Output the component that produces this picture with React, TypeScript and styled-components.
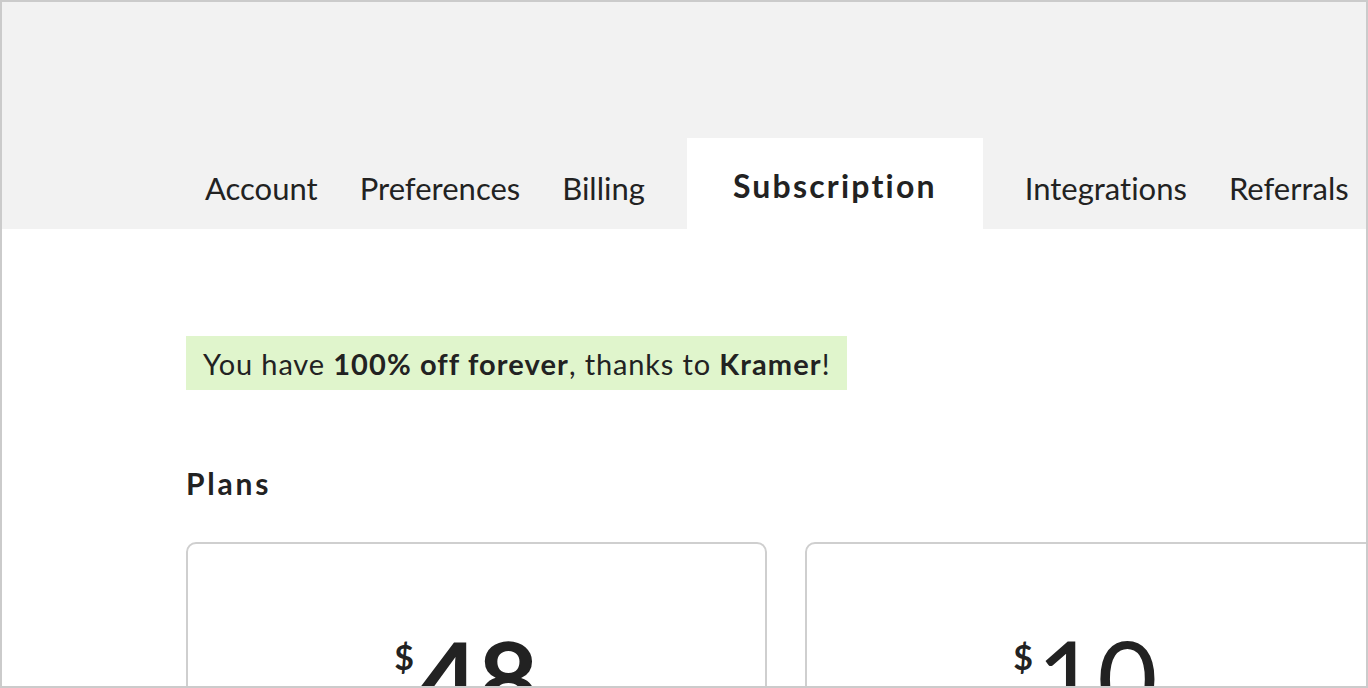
import React from 'react'
import styled, { createGlobalStyle } from 'styled-components'

const GlobalStyle = createGlobalStyle`
  html, body {
    margin: 0;
    padding: 0;
    background: #fff;
  }
  body {
    font-family: Lato, "Open Sans", sans-serif;
    color: #222;
  }
  * {
    box-sizing: border-box;
  }
`

const Frame = styled.div`
  width: 1368px;
  height: 688px;
  border: 2px solid #cbcbcb;
  overflow: hidden;
  display: flex;
  flex-direction: column;
`

const Header = styled.header`
  height: 227px;
  flex-shrink: 0;
  background: #f2f2f2;
  display: flex;
  align-items: flex-end;
  padding-left: 182px;
`

const TabList = styled.nav`
  display: flex;
  align-items: flex-end;
  white-space: nowrap;
`

const Tab = styled.a<{ $active?: boolean }>`
  display: flex;
  align-items: center;
  justify-content: center;
  height: 91px;
  margin: ${p => (p.$active ? '0 21px' : '0')};
  padding: ${p => (p.$active ? '3px 46px 0' : '8px 21px 0')};
  background: ${p => (p.$active ? '#fff' : 'transparent')};
  font-size: ${p => (p.$active ? '32px' : '31px')};
  font-weight: ${p => (p.$active ? 700 : 400)};
  letter-spacing: ${p => (p.$active ? '2.2px' : '0')};
  font-variant-ligatures: no-common-ligatures;
  color: #222;
  text-decoration: none;
  cursor: pointer;
`

const Content = styled.main`
  flex: 1;
  padding: 107px 0 0 184px;
  display: flex;
  flex-direction: column;
  align-items: flex-start;
`

const Discount = styled.p`
  margin: 0;
  height: 54px;
  display: flex;
  align-items: center;
  padding: 0 17px;
  background: #e0f5cc;
  font-size: 29px;
  letter-spacing: 0.85px;
  white-space: pre;

  strong {
    font-weight: 700;
    letter-spacing: 1.1px;
  }
`

const SectionTitle = styled.h2`
  margin: 73px 0 0 0;
  font-size: 30px;
  font-weight: 700;
  letter-spacing: 2.8px;
  line-height: 40px;
`

const Cards = styled.div`
  display: flex;
  gap: 38px;
  margin-top: 39px;
`

const Card = styled.div`
  width: 581px;
  height: 300px;
  flex-shrink: 0;
  border: 2px solid #cfcfcf;
  border-radius: 10px;
  display: flex;
  justify-content: center;
  padding-top: 86px;
`

const Price = styled.div<{ $bold?: boolean }>`
  display: flex;
  align-items: flex-start;
  margin-right: 20px;
  font-weight: ${p => (p.$bold ? 700 : 400)};
`

const Currency = styled.span`
  font-size: 34px;
  font-weight: 700;
  line-height: 1;
  margin-top: 10px;
  margin-right: 4px;
`

const Amount = styled.span`
  font-size: 104px;
  line-height: 0.9;
`

export default function App() {
  const tabs = ['Account', 'Preferences', 'Billing', 'Subscription', 'Integrations', 'Referrals']
  return (
    <>
      <GlobalStyle />
      <Frame>
        <Header>
          <TabList>
            {tabs.map(t => (
              <Tab key={t} $active={t === 'Subscription'}>{t}</Tab>
            ))}
          </TabList>
        </Header>
        <Content>
          <Discount>
            You have <strong>100% off forever</strong>, thanks to <strong>Kramer</strong>!
          </Discount>
          <SectionTitle>Plans</SectionTitle>
          <Cards>
            <Card>
              <Price $bold>
                <Currency>$</Currency>
                <Amount>48</Amount>
              </Price>
            </Card>
            <Card>
              <Price>
                <Currency>$</Currency>
                <Amount>10</Amount>
              </Price>
            </Card>
          </Cards>
        </Content>
      </Frame>
    </>
  )
}
